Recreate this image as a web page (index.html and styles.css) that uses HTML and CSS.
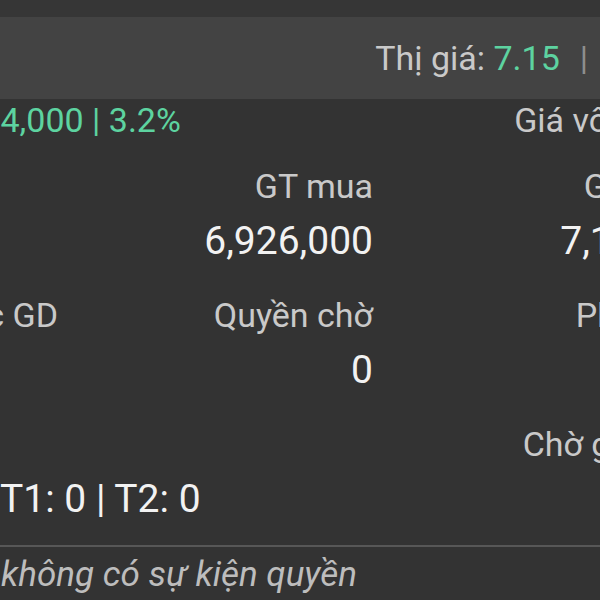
FILE: index.html
```html
<!DOCTYPE html>
<html lang="vi">

<head>
    <meta charset="UTF-8">
    <meta name="viewport" content="width=device-width, initial-scale=1.0">
    <title>Danh mục</title>
    <link rel="stylesheet" href="styles.css">
</head>

<body>
    <div class="top-strip"></div>

    <!-- Quote bar -->
    <div class="quote-bar">
        <span class="quote-name">Tài khoản</span>
        <span class="quote-price">Thị giá: <span class="up">7.15</span></span>
        <span class="quote-sep">|</span>
        <span class="quote-more">KL: 1,000</span>
    </div>

    <div class="sheet">
        <div class="pnl-row">
            <span class="pnl-value up">+224,000 | 3.2%</span>
            <span class="pnl-cost">Giá vốn: 6.926</span>
        </div>

        <div class="stat-grid">
            <!-- row 1 -->
            <div class="stat"></div>
            <div class="stat">
                <span class="stat-label">GT mua</span>
                <span class="stat-value">6,926,000</span>
            </div>
            <div class="stat">
                <span class="stat-label">GT bán ra</span>
                <span class="stat-value">7,150,000</span>
            </div>

            <!-- row 2 -->
            <div class="stat">
                <span class="stat-label">KL được GD</span>
                <span class="stat-value"></span>
            </div>
            <div class="stat">
                <span class="stat-label">Quyền chờ</span>
                <span class="stat-value">0</span>
            </div>
            <div class="stat">
                <span class="stat-label">Phí &amp; thuế</span>
                <span class="stat-value">21,450</span>
            </div>

            <!-- row 3 -->
            <div class="stat stat-wide">
                <span class="stat-label"></span>
                <span class="stat-value">T1: 0 | T2: 0</span>
            </div>
            <div class="stat"></div>
            <div class="stat">
                <span class="stat-label">Chờ giao dịch</span>
                <span class="stat-value">0</span>
            </div>
        </div>

        <div class="divider"></div>
        <p class="note">không có sự kiện quyền</p>
    </div>
</body>

</html>
```

FILE: styles.css
```css
/* styles.css */
html,
body {
    margin: 0;
    padding: 0;
    width: 600px;
    height: 600px;
    overflow: hidden;
    background-color: #333333;
    font-family: Roboto, "Noto Sans", sans-serif;
    white-space: nowrap;
}

.up {
    color: #5dd3a0;
}

.top-strip {
    height: 17px;
    background-color: #363636;
}

.quote-bar {
    display: flex;
    align-items: center;
    height: 82px;
    background-color: #434343;
    font-size: 34px;
    color: #c9c9c9;
}

.quote-bar span {
    flex-shrink: 0;
}

.quote-name {
    margin-left: -145px;
}

.quote-price {
    margin-left: 374px;
}

.quote-sep {
    margin-left: 20px;
    color: #8e8e8e;
}

.quote-more {
    margin-left: 18px;
}

.sheet {
    width: 729px;
}

.pnl-row {
    display: flex;
    justify-content: space-between;
    margin-top: 1px;
    font-size: 34px;
    line-height: 40px;
}

.pnl-value {
    margin-left: -57px;
}

.pnl-cost {
    color: #c9c9c9;
}

.stat-grid {
    display: grid;
    grid-template-columns: 58px 315px 356px;
    row-gap: 31px;
    margin-top: 26px;
}

.stat {
    display: flex;
    flex-direction: column;
    align-items: flex-end;
    gap: 12px;
}

.stat-wide {
    align-items: flex-start;
}

.stat-label {
    min-height: 40px;
    font-size: 34px;
    line-height: 40px;
    color: #c9c9c9;
}

.stat-value {
    min-height: 46px;
    font-size: 39px;
    line-height: 46px;
    color: #f2f2f2;
}

.divider {
    height: 2px;
    margin-top: 23px;
    background-color: #575757;
}

.note {
    margin: 8px 0 0 1px;
    font-size: 35px;
    line-height: 40px;
    font-style: italic;
    color: #bdbdbd;
}
```
